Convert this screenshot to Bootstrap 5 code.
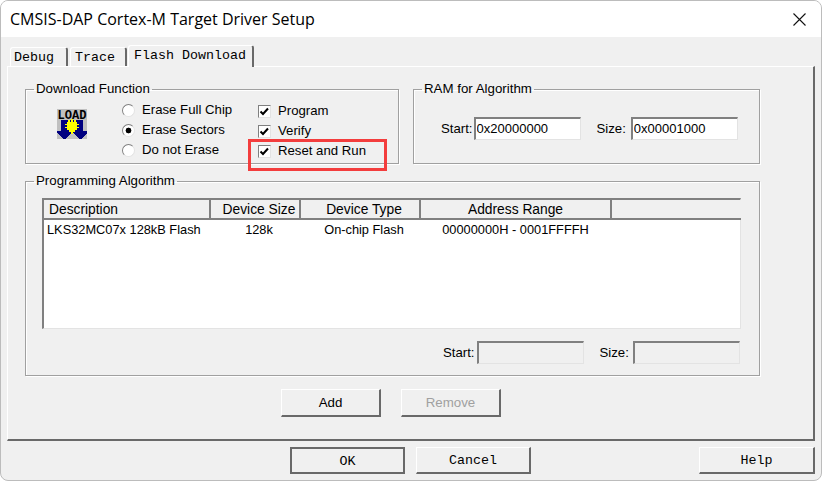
<!DOCTYPE html>
<html lang="en">
<head>
<meta charset="utf-8">
<title>CMSIS-DAP Cortex-M Target Driver Setup</title>
<link rel="stylesheet" href="https://cdn.jsdelivr.net/npm/bootstrap@5.3.0/dist/css/bootstrap.min.css">
<style>
html,body{height:100%;background:#fff;margin:0;overflow:hidden}
body{font-family:"Liberation Sans",Arial,sans-serif;font-size:13.2px;line-height:16px;color:#000}
.dlg-win{width:822px;height:481px;background:#f0f0f0;border:1px solid #bcbcbc;border-radius:8px;overflow:hidden}
.dlg-title{height:36px;background:#fff;padding:0 9px;font-family:"Open Sans","Noto Sans",sans-serif;font-size:16px}
.dlg-close{width:13px;height:13px;margin-right:6px}
.dlg-tabs{height:29px;padding-left:9px;font-family:"Liberation Mono",monospace;font-size:13.33px}
.dlg-tab.nav-link{height:19px;color:#000;padding:2px 0 0 3px;text-align:left;border:solid;border-width:1px 2px 0 1px;border-color:#fff #696969 #fff #fff;border-top-left-radius:3px;border-top-right-radius:3px;margin-right:2px;background:#f0f0f0}
.dlg-tab.is-debug{width:58px}
.dlg-tab.is-trace{width:57px;margin-right:1px;padding-left:4px}
.dlg-tab.is-flash{width:126px;margin:0 0 -1px;height:22px;position:relative;z-index:1;padding-left:5px}
.dlg-panel{width:808px;height:375px;margin-left:6px;border:solid;border-width:1px 2px 2px 1px;border-color:#fff #696969 #696969 #fff;padding:14px 0 0 17px}
.dlg-grp{border:1px solid #a0a0a0;box-shadow:1px 1px 0 #fff,inset 1px 1px 0 #fff;padding:0;margin:0;position:relative}
.dlg-grp legend{float:none;width:auto;font-size:13.3px;line-height:16px;margin:0 0 0 8px;padding:0 2px;color:#000}
.grp-load{width:374px;height:83px;margin-right:14px}
.grp-ram{width:347px;height:83px}
.grp-algo{width:735px;height:203px;margin-top:9px}
.load-icon{width:30px;height:30px;margin:12px 35px 0 31px;display:block}
.opt-col{width:136px}
.opt-col.is-radio{margin-top:3px}
.opt-col.is-check{margin-top:4px}
.opt-row.form-check{height:20px;min-height:0;margin:0;white-space:nowrap}
.opt-row .form-check-input{margin:0 7px 0 0;flex:none;border-radius:0;width:13px;height:13px;background-color:#fff;border:solid 1px;border-color:#808080 #e3e3e3 #e3e3e3 #808080;box-shadow:none}
.opt-row .form-check-input:checked{background-color:#fff;border-color:#808080 #e3e3e3 #e3e3e3 #808080}
.opt-row .form-check-input[type=radio]{border-radius:50%}
.opt-row .form-check-input[type=radio]:checked{background-image:radial-gradient(circle,#000 0,#000 2.6px,transparent 3.2px)}
.opt-row .form-check-input[type=checkbox]:checked{background-image:url("data:image/svg+xml,%3Csvg xmlns='http://www.w3.org/2000/svg' viewBox='0 0 11 11'%3E%3Cpath d='M1.5 5.500 4 8 9 2.500' fill='none' stroke='%23000' stroke-width='2'/%3E%3C/svg%3E");background-size:11px 11px}
.opt-row .form-check-label{color:#000}
.ram-row{margin:20px 0 0 27px}
.ram-label{margin-right:1px}
.ram-label.is-size{margin:0 5px 0 16px}
.dlg-field.form-control{width:107px;height:23px;min-height:0;border:solid;border-width:2px 1px 1px 2px;border-color:#808080 #e3e3e3 #e3e3e3 #808080;border-radius:0;padding:0 0 2px 1px;font-size:13px;line-height:16px;color:#000;background:#fff;box-shadow:none}
.dlg-field.is-off{background:#f0f0f0}
.algo-list{width:699px;height:131px;margin:9px 0 0 16px;background:#fff;border:solid;border-width:2px 1px 1px 2px;border-color:#808080 #e3e3e3 #e3e3e3 #808080}
.algo-list .table{width:697px;table-layout:fixed;margin:0;--bs-table-bg:transparent;--bs-table-color:#000;font-size:12.8px;line-height:16px}
.algo-list th{height:19px;padding:1px 0 0;font-weight:400;font-size:13.8px;background:#f0f0f0;text-align:center;border:solid;border-width:0 2px 2px 0;border-color:#808080;box-shadow:none}
.algo-list th:last-child{border-right:0}
.algo-list th.is-left{text-align:left;padding-left:5px}
.algo-list th.is-shift,.algo-list td.is-shift{padding-left:8px}
.algo-list td{padding:2px 0 0;border:0;text-align:center;white-space:nowrap}
.algo-list td.is-left{text-align:left;padding-left:3px}
.algo-foot{margin:12px 0 0 417px}
.algo-foot .ram-label:first-child{margin-right:2px}
.algo-foot .ram-label.is-size{margin-right:4px}
.btn-row{margin:13px 0 0 256px;gap:20px}
.btn.dlg-btn{width:100px;height:28px;padding:0;border-radius:0;border:solid 1px;border-width:1px 2px 2px 1px;border-color:#fff #696969 #696969 #fff;background:#f0f0f0;color:#000;font-size:13.3px;line-height:16px;opacity:1}
.btn.dlg-btn:disabled{color:#a0a0a0;background:#f0f0f0;border-color:#fff #696969 #696969 #fff;opacity:1}
.dlg-foot{padding:6px 6px 0 289px;font-family:"Liberation Mono",monospace}
.dlg-foot .btn.dlg-btn{width:115px;height:27px;font-family:"Liberation Mono",monospace;font-size:13.33px;padding:2px 0 0}
.dlg-foot .btn.is-default{border:2px solid #696969;margin-right:11px}
.dlg-foot .btn.is-help{width:116px;margin-left:auto}
.red-mark{position:absolute;left:222px;top:42px;width:139px;height:32px;border:3px solid #f33d3d;pointer-events:none}
</style>
</head>
<body>
<div class="dlg-win d-flex flex-column">
  <div class="dlg-title d-flex align-items-center justify-content-between">
    <span>CMSIS-DAP Cortex-M Target Driver Setup</span>
    <svg class="dlg-close" viewBox="0 0 13 13"><path d="M.5.5l12 12M12.500.5l-12 12" stroke="#111" stroke-width="1.100" fill="none"/></svg>
  </div>
  <ul class="nav dlg-tabs align-items-end flex-nowrap">
    <li class="nav-item"><a class="nav-link dlg-tab is-debug" href="#">Debug</a></li>
    <li class="nav-item"><a class="nav-link dlg-tab is-trace" href="#">Trace</a></li>
    <li class="nav-item"><a class="nav-link dlg-tab is-flash active" href="#">Flash Download</a></li>
  </ul>
  <div class="dlg-panel">
    <div class="d-flex">
      <fieldset class="dlg-grp grp-load">
        <legend>Download Function</legend>
        <div class="d-flex">
          <svg class="load-icon" viewBox="0 0 30 30" shape-rendering="crispEdges">
            <rect width="30" height="30" fill="#c0c0c0"/>
            <text x="15" y="9.500" text-anchor="middle" font-family="Liberation Mono" font-size="12" font-weight="700" textLength="29" lengthAdjust="spacingAndGlyphs" fill="#000">LOAD</text>
            <path d="M4 11h22v11h4v2l-6 6h-2l-6-6v-2h-2v2l-6 6H6l-6-6v-2h4z" fill="#000080"/>
            <path d="M14 10h2v3h1v-2h2v2h1v2h2v1h-2v2h2v1h-2v2h-2v2h-2v2h-2v-2h-2v-2h-2v-2H8v-1h2v-2H8v-1h2v-2h1v-2h2v2h1z" fill="#ffff00"/>
          </svg>
          <div class="opt-col is-radio">
            <div class="opt-row d-flex align-items-center form-check p-0"><input class="form-check-input" type="radio" name="erase" id="e1"><label class="form-check-label" for="e1">Erase Full Chip</label></div>
            <div class="opt-row d-flex align-items-center form-check p-0"><input class="form-check-input" type="radio" name="erase" id="e2" checked><label class="form-check-label" for="e2">Erase Sectors</label></div>
            <div class="opt-row d-flex align-items-center form-check p-0"><input class="form-check-input" type="radio" name="erase" id="e3"><label class="form-check-label" for="e3">Do not Erase</label></div>
          </div>
          <div class="opt-col is-check">
            <div class="opt-row d-flex align-items-center form-check p-0"><input class="form-check-input" type="checkbox" id="c1" checked><label class="form-check-label" for="c1">Program</label></div>
            <div class="opt-row d-flex align-items-center form-check p-0"><input class="form-check-input" type="checkbox" id="c2" checked><label class="form-check-label" for="c2">Verify</label></div>
            <div class="opt-row d-flex align-items-center form-check p-0"><input class="form-check-input" type="checkbox" id="c3" checked><label class="form-check-label" for="c3">Reset and Run</label></div>
          </div>
        </div>
        <div class="red-mark"></div>
      </fieldset>
      <fieldset class="dlg-grp grp-ram">
        <legend>RAM for Algorithm</legend>
        <div class="ram-row d-flex align-items-center">
          <span class="ram-label">Start:</span><input class="form-control dlg-field" value="0x20000000">
          <span class="ram-label is-size">Size:</span><input class="form-control dlg-field" value="0x00001000">
        </div>
      </fieldset>
    </div>
    <fieldset class="dlg-grp grp-algo">
      <legend>Programming Algorithm</legend>
      <div class="algo-list">
        <table class="table">
          <colgroup><col style="width:166px"><col style="width:90px"><col style="width:120px"><col style="width:191px"><col></colgroup>
          <thead><tr><th class="is-left">Description</th><th class="is-shift">Device Size</th><th class="is-shift">Device Type</th><th>Address Range</th><th></th></tr></thead>
          <tbody><tr><td class="is-left">LKS32MC07x 128kB Flash</td><td class="is-shift">128k</td><td class="is-shift">On-chip Flash</td><td>00000000H - 0001FFFFH</td><td></td></tr></tbody>
        </table>
      </div>
      <div class="algo-foot d-flex align-items-center">
        <span class="ram-label">Start:</span><input class="form-control dlg-field is-off" disabled>
        <span class="ram-label is-size">Size:</span><input class="form-control dlg-field is-off" disabled>
      </div>
    </fieldset>
    <div class="btn-row d-flex">
      <button class="btn dlg-btn" type="button">Add</button>
      <button class="btn dlg-btn" type="button" disabled>Remove</button>
    </div>
  </div>
  <div class="dlg-foot d-flex">
    <button class="btn dlg-btn is-default" type="button">OK</button>
    <button class="btn dlg-btn" type="button">Cancel</button>
    <button class="btn dlg-btn is-help" type="button">Help</button>
  </div>
</div>
</body>
</html>
